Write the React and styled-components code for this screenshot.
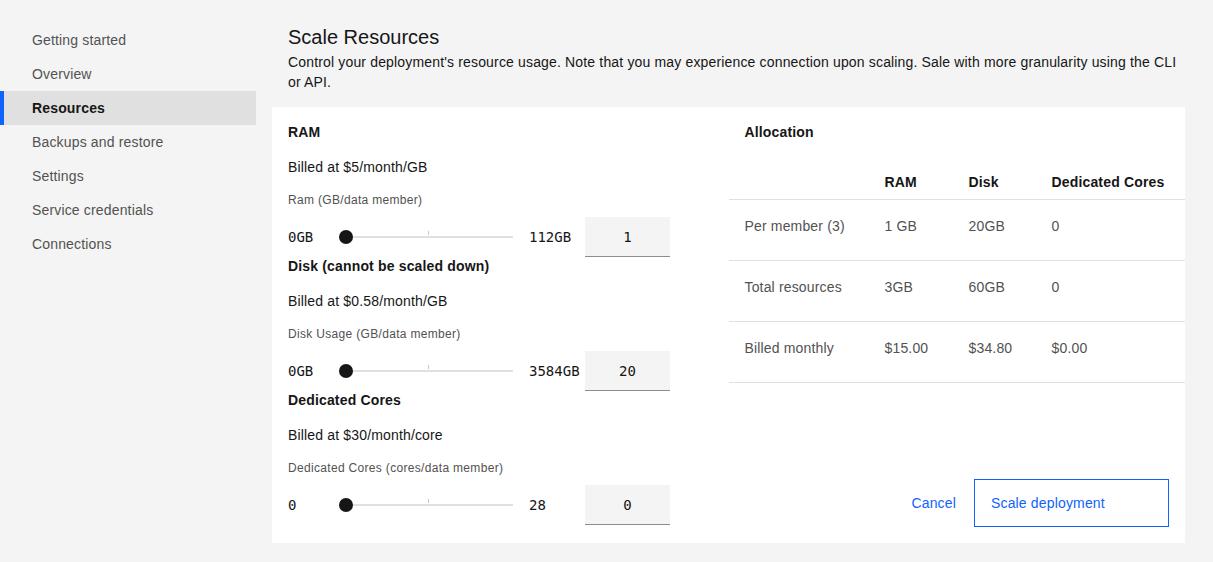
import React from 'react';
import styled, { createGlobalStyle } from 'styled-components';

const GlobalStyle = createGlobalStyle`
  body {
    margin: 0;
    background: #f4f4f4;
    font-family: "Liberation Sans", Arial, sans-serif;
    color: #161616;
  }
`;

const navItems = [
  'Getting started',
  'Overview',
  'Resources',
  'Backups and restore',
  'Settings',
  'Service credentials',
  'Connections',
];

const sections = [
  {
    title: 'RAM',
    billed: 'Billed at $5/month/GB',
    label: 'Ram (GB/data member)',
    min: '0GB',
    max: '112GB',
    value: '1',
  },
  {
    title: 'Disk (cannot be scaled down)',
    billed: 'Billed at $0.58/month/GB',
    label: 'Disk Usage (GB/data member)',
    min: '0GB',
    max: '3584GB',
    value: '20',
  },
  {
    title: 'Dedicated Cores',
    billed: 'Billed at $30/month/core',
    label: 'Dedicated Cores (cores/data member)',
    min: '0',
    max: '28',
    value: '0',
  },
];

const rows = [
  ['Per member (3)', '1 GB', '20GB', '0'],
  ['Total resources', '3GB', '60GB', '0'],
  ['Billed monthly', '$15.00', '$34.80', '$0.00'],
];

const App = () => {
  return (
    <>
      <GlobalStyle />
      <Page>
        <Sidebar>
          {navItems.map((item) => (
            <NavItem key={item} $active={item === 'Resources'}>
              {item}
            </NavItem>
          ))}
        </Sidebar>
        <Main>
          <Header>
            <Title>Scale Resources</Title>
            <Description>
              Control your deployment's resource usage. Note that you may experience connection upon
              scaling. Sale with more granularity using the CLI or API.
            </Description>
          </Header>
          <Card>
            <LeftColumn>
              {sections.map((s) => (
                <Section key={s.title}>
                  <SectionTitle>{s.title}</SectionTitle>
                  <Billed>{s.billed}</Billed>
                  <FieldLabel>{s.label}</FieldLabel>
                  <SliderRow>
                    <RangeLabel>{s.min}</RangeLabel>
                    <Track>
                      <Tick />
                      <Thumb />
                    </Track>
                    <RangeLabel $max>{s.max}</RangeLabel>
                    <NumberInput readOnly value={s.value} />
                  </SliderRow>
                </Section>
              ))}
            </LeftColumn>
            <RightColumn>
              <SectionTitle>Allocation</SectionTitle>
              <Table>
                <HeadRow>
                  <span />
                  <span>RAM</span>
                  <span>Disk</span>
                  <span>Dedicated Cores</span>
                </HeadRow>
                {rows.map((r) => (
                  <BodyRow key={r[0]}>
                    {r.map((c, i) => (
                      <span key={i}>{c}</span>
                    ))}
                  </BodyRow>
                ))}
              </Table>
              <Actions>
                <GhostButton>Cancel</GhostButton>
                <OutlineButton>Scale deployment</OutlineButton>
              </Actions>
            </RightColumn>
          </Card>
        </Main>
      </Page>
    </>
  );
};

export default App;

const Page = styled.div`
  display: flex;
  min-height: 562px;
`;

const Sidebar = styled.nav`
  width: 256px;
  flex-shrink: 0;
  padding-top: 23px;
  display: flex;
  flex-direction: column;
`;

const NavItem = styled.div`
  height: 34px;
  display: flex;
  align-items: center;
  padding-left: 32px;
  font-size: 14px;
  letter-spacing: 0.16px;
  color: ${(p) => (p.$active ? '#161616' : '#525252')};
  font-weight: ${(p) => (p.$active ? 700 : 400)};
  background: ${(p) => (p.$active ? '#e0e0e0' : 'transparent')};
  box-shadow: ${(p) => (p.$active ? 'inset 4px 0 0 #0f62fe' : 'none')};
`;

const Main = styled.main`
  flex: 1;
  padding: 23px 28px 0 16px;
`;

const Header = styled.div`
  padding: 0 0 0 16px;
  margin-bottom: 15px;
`;

const Title = styled.h1`
  margin: 0;
  font-size: 20px;
  line-height: 28px;
  font-weight: 400;
`;

const Description = styled.p`
  margin: 1px 0 0;
  font-size: 14px;
  line-height: 20px;
  letter-spacing: 0.16px;
`;

const Card = styled.div`
  background: #ffffff;
  display: grid;
  grid-template-columns: 1fr 1fr;
`;

const LeftColumn = styled.div`
  padding: 16px 58px 18px 16px;
`;

const Section = styled.div`
  display: flex;
  flex-direction: column;
`;

const SectionTitle = styled.h4`
  margin: 0;
  font-size: 14px;
  line-height: 18px;
  font-weight: 700;
  letter-spacing: 0.16px;
`;

const Billed = styled.div`
  margin-top: 17px;
  font-size: 14px;
  line-height: 18px;
  letter-spacing: 0.16px;
`;

const FieldLabel = styled.label`
  margin-top: 16px;
  font-size: 12px;
  line-height: 16px;
  letter-spacing: 0.32px;
  color: #525252;
`;

const SliderRow = styled.div`
  margin-top: 9px;
  display: flex;
  align-items: center;
  height: 40px;
`;

const RangeLabel = styled.span`
  font-family: "DejaVu Sans Mono", "Liberation Mono", monospace;
  font-size: 14px;
  width: ${(p) => (p.$max ? '56px' : '51px')};
  margin-left: ${(p) => (p.$max ? '16px' : '0')};
  flex-shrink: 0;
`;

const Track = styled.div`
  position: relative;
  width: 174px;
  height: 2px;
  background: #e0e0e0;
  flex-shrink: 0;
`;

const Tick = styled.div`
  position: absolute;
  left: 89px;
  top: -5px;
  width: 1px;
  height: 4px;
  background: #c6c6c6;
`;

const Thumb = styled.div`
  position: absolute;
  left: 0;
  top: -6px;
  width: 14px;
  height: 14px;
  border-radius: 50%;
  background: #161616;
`;

const NumberInput = styled.input`
  box-sizing: border-box;
  width: 85px;
  height: 40px;
  border: 0;
  border-bottom: 1px solid #8d8d8d;
  background: #f4f4f4;
  font-family: "DejaVu Sans Mono", "Liberation Mono", monospace;
  font-size: 14px;
  color: #161616;
  text-align: center;
  outline: none;
  padding: 0;
`;

const RightColumn = styled.div`
  display: flex;
  flex-direction: column;
  padding: 16px 0 16px;

  & > h4 {
    padding-left: 16px;
  }
`;

const Table = styled.div`
  margin-top: 11px;
  display: flex;
  flex-direction: column;
`;

const HeadRow = styled.div`
  box-sizing: border-box;
  display: grid;
  grid-template-columns: 140px 84px 83px 1fr;
  padding: 0 16px 8px;
  height: 48px;
  align-items: end;
  border-bottom: 1px solid #e0e0e0;
  font-size: 14px;
  line-height: 18px;
  font-weight: 700;
  letter-spacing: 0.16px;
`;

const BodyRow = styled.div`
  display: grid;
  grid-template-columns: 140px 84px 83px 1fr;
  padding: 17px 16px 0;
  height: 43px;
  align-items: start;
  border-bottom: 1px solid #e0e0e0;
  font-size: 14px;
  line-height: 18px;
  letter-spacing: 0.16px;
  color: #525252;
`;

const Actions = styled.div`
  margin-top: auto;
  display: flex;
  justify-content: flex-end;
  align-items: center;
  padding-right: 16px;
`;

const GhostButton = styled.button`
  background: none;
  border: 0;
  height: 48px;
  padding: 0 18px 0 16px;
  font-family: inherit;
  font-size: 14px;
  letter-spacing: 0.16px;
  color: #0f62fe;
  cursor: pointer;
`;

const OutlineButton = styled.button`
  box-sizing: border-box;
  width: 195px;
  height: 48px;
  background: #ffffff;
  border: 1px solid #0f62fe;
  padding: 0 16px;
  text-align: left;
  font-family: inherit;
  font-size: 14px;
  letter-spacing: 0.16px;
  color: #0f62fe;
  cursor: pointer;
`;
